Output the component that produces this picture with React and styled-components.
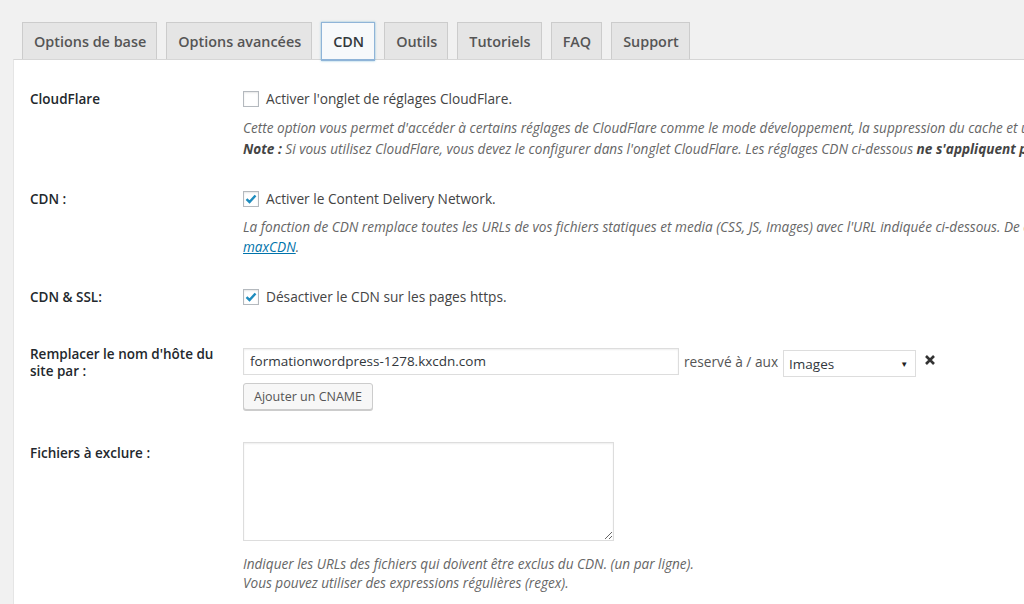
import React from 'react';
import styled, { createGlobalStyle } from 'styled-components';

const Global = createGlobalStyle`
  html, body {
    margin: 0;
    background: #f1f1f1;
    overflow: hidden;
  }
  body {
    font-family: "Open Sans", "Liberation Sans", sans-serif;
    color: #444;
  }
`;

const Page = styled.div`
  padding: 22px 0 0 13px;
  width: 1200px;
`;

const Tabs = styled.nav`
  display: flex;
  gap: 9px;
  padding-left: 9px;
  height: 37px;
  align-items: flex-end;
  position: relative;
  z-index: 1;
`;

const Tab = styled.a`
  box-sizing: border-box;
  height: ${p => (p.active ? '39px' : '37px')};
  margin-bottom: ${p => (p.active ? '-2px' : '0')};
  padding: 0 10px 0 11px;
  display: flex;
  align-items: center;
  font-size: 14.4px;
  font-weight: 600;
  color: ${p => (p.active ? '#32373c' : '#555')};
  background: ${p => (p.active ? '#f7f9fb' : '#e5e5e5')};
  border: 1px solid ${p => (p.active ? '#8fb4d8' : '#ccc')};
  border-bottom: ${p => (p.active ? '2px solid #8fb4d8' : 'none')};
  box-shadow: ${p => (p.active ? '0 0 2px rgba(30,140,190,.5)' : 'none')};
  text-decoration: none;
  cursor: pointer;
`;

const Panel = styled.div`
  background: #fff;
  border: 1px solid #e5e5e5;
  border-top-color: #d6d6d6;
  padding: 14px 0 0 16px;
  min-height: 560px;
`;

const Row = styled.div`
  display: flex;
  padding: ${p => p.pad || '15px 0'};
`;

const Label = styled.div`
  width: 213px;
  flex: none;
  font-size: 13.5px;
  font-weight: 600;
  color: #23282d;
  line-height: ${p => p.lh || '20px'};
  padding-top: ${p => p.top || '0'};
`;

const Field = styled.div`
  display: flex;
  flex-direction: column;
  align-items: flex-start;
`;

const Check = styled.label`
  display: flex;
  align-items: center;
  gap: 7px;
  font-size: 13.7px;
  line-height: 20px;
  color: #444;
`;

const Box = styled.span`
  box-sizing: border-box;
  width: 16px;
  height: 16px;
  border: 1px solid #b4b9be;
  background: #fff;
  box-shadow: inset 0 1px 2px rgba(0,0,0,.1);
  display: flex;
  align-items: center;
  justify-content: center;
`;

const Desc = styled.p`
  margin: ${p => p.mt || '8px'} 0 0;
  font-size: 13.6px;
  font-style: italic;
  color: #666;
  line-height: ${p => p.lh || '21px'};
  white-space: nowrap;

  b { color: #444; }
  a { color: #0073aa; }
`;

const HostLine = styled.div`
  display: flex;
  align-items: center;
  gap: 5px;
`;

const Input = styled.input`
  box-sizing: border-box;
  width: 436px;
  height: 27px;
  border: 1px solid #ddd;
  box-shadow: inset 0 1px 2px rgba(0,0,0,.07);
  padding: 0 6px;
  font-family: inherit;
  font-size: 13.5px;
  color: #32373c;
`;

const Inline = styled.span`
  font-size: 13.7px;
  color: #555;
`;

const Select = styled.div`
  box-sizing: border-box;
  width: 133px;
  height: 27px;
  margin-top: 5px;
  border: 1px solid #ddd;
  background: #fff;
  display: flex;
  align-items: center;
  justify-content: space-between;
  padding: 0 7px 0 5px;
  font-size: 13.5px;
  color: #32373c;
`;

const Arrow = styled.span`
  font-size: 8px;
  color: #222;
`;

const Remove = styled.span`
  margin: -2px 0 0 3px;
  display: flex;
`;

const Button = styled.button`
  margin-top: 6px;
  height: 27px;
  padding: 0 10px;
  border: 1px solid #ccc;
  border-radius: 3px;
  background: #f7f7f7;
  box-shadow: 0 1px 0 #ccc;
  font-family: inherit;
  font-size: 12.5px;
  color: #555;
`;

const Area = styled.textarea`
  box-sizing: border-box;
  width: 371px;
  height: 99px;
  border: 1px solid #ddd;
  box-shadow: inset 0 1px 2px rgba(0,0,0,.07);
  resize: both;
  font-family: inherit;
`;

const tabs = ['Options de base', 'Options avancées', 'CDN', 'Outils', 'Tutoriels', 'FAQ', 'Support'];

const Checkbox = ({ checked, children }) => (
  <Check>
    <Box>
      {checked && (
        <svg width="12" height="10" viewBox="0 0 12 10">
          <path d="M1.5 5.2 L4.5 8 L10.5 1.5" fill="none" stroke="#1e8cbe" strokeWidth="2.4" />
        </svg>
      )}
    </Box>
    {children}
  </Check>
);

export default function App() {
  return (
    <Page>
      <Global />
      <Tabs>
        {tabs.map(t => (
          <Tab key={t} active={t === 'CDN'}>{t}</Tab>
        ))}
      </Tabs>
      <Panel>
        <Row pad="15px 0 15px">
          <Label>CloudFlare</Label>
          <Field>
            <Checkbox>Activer l'onglet de réglages CloudFlare.</Checkbox>
            <Desc>
              Cette option vous permet d'accéder à certains réglages de CloudFlare comme le mode développement, la suppression du cache et une optimisation automatique.
              <br />
              <b>Note :</b> Si vous utilisez CloudFlare, vous devez le configurer dans l'onglet CloudFlare. Les réglages CDN ci-dessous <b>ne s'appliquent pas</b> à CloudFlare.
            </Desc>
          </Field>
        </Row>
        <Row pad="15px 0 14px">
          <Label>CDN :</Label>
          <Field>
            <Checkbox checked>Activer le Content Delivery Network.</Checkbox>
            <Desc lh="20px">
              La fonction de CDN remplace toutes les URLs de vos fichiers statiques et media (CSS, JS, Images) avec l'URL indiquée ci-dessous. De cette façon, votre contenu sera servi via un CDN comme
              <br />
              <a href="#">maxCDN</a>.
            </Desc>
          </Field>
        </Row>
        <Row pad="16px 0 22px">
          <Label>CDN &amp; SSL:</Label>
          <Field>
            <Checkbox checked>Désactiver le CDN sur les pages https.</Checkbox>
          </Field>
        </Row>
        <Row pad="16px 0 20px">
          <Label lh="17px" top="1px">Remplacer le nom d'hôte du<br />site par :</Label>
          <Field>
            <HostLine>
              <Input defaultValue="formationwordpress-1278.kxcdn.com" />
              <Inline>reservé à / aux</Inline>
              <Select>
                Images
                <Arrow>▼</Arrow>
              </Select>
              <Remove>
                <svg width="12" height="12" viewBox="0 0 12 12">
                  <path d="M2 2 L10 10 M10 2 L2 10" stroke="#333" strokeWidth="2.6" />
                </svg>
              </Remove>
            </HostLine>
            <Button>Ajouter un CNAME</Button>
          </Field>
        </Row>
        <Row pad="12px 0">
          <Label top="1px">Fichiers à exclure :</Label>
          <Field>
            <Area />
            <Desc mt="13px" lh="19px">
              Indiquer les URLs des fichiers qui doivent être exclus du CDN. (un par ligne).
              <br />
              Vous pouvez utiliser des expressions régulières (regex).
            </Desc>
          </Field>
        </Row>
      </Panel>
    </Page>
  );
}
